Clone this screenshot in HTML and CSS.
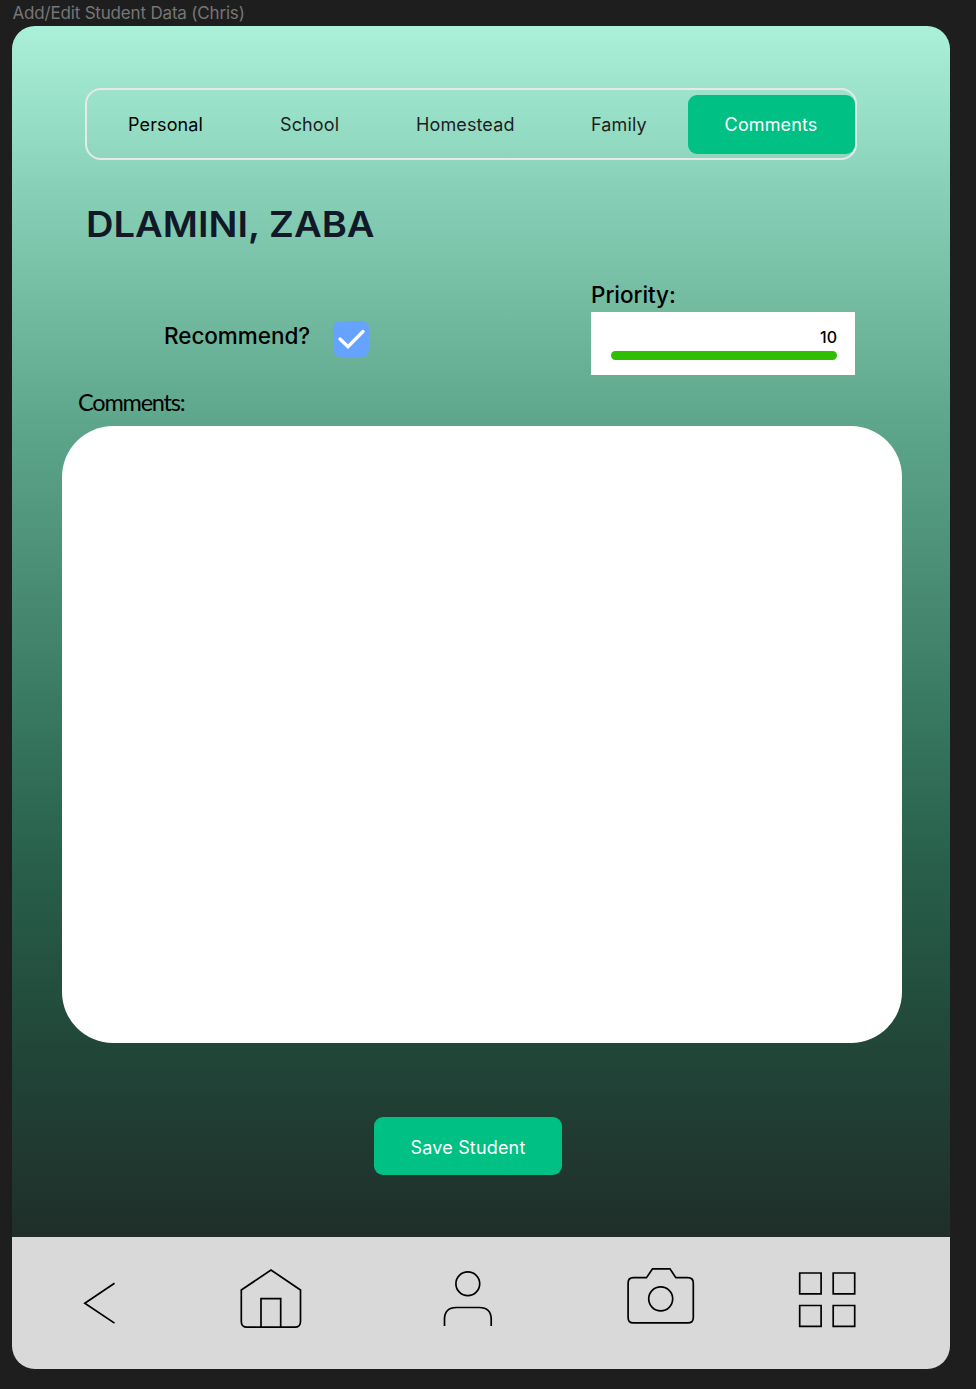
FILE: index.html
```html
<!DOCTYPE html>
<html lang="en">
<head>
<meta charset="utf-8">
<title>Add/Edit Student Data</title>
<link rel="stylesheet" href="styles.css">
</head>
<body>
<div class="frame-label">Add/Edit Student Data (Chris)</div>
<main class="screen">
  <nav class="tabs">
    <a class="tab personal">Personal</a>
    <a class="tab school">School</a>
    <a class="tab homestead">Homestead</a>
    <a class="tab family">Family</a>
    <a class="tab active">Comments</a>
  </nav>
  <h1 class="name"><span class="name-text">DLAMINI, ZABA</span></h1>
  <section class="fields">
    <div class="recommend">
      <span class="field-label recommend-label">Recommend?</span>
      <svg class="checkbox" width="36" height="36" viewBox="0 0 36 36"><rect width="36" height="36" rx="7.5" fill="#66a3ff"/><path d="M7 18l8 7.700L30 10.500" fill="none" stroke="#fff" stroke-width="3.300" stroke-linecap="round"/></svg>
    </div>
    <div class="priority">
      <span class="field-label priority-label">Priority:</span>
      <div class="slider"><span class="value">10</span><div class="track"></div></div>
    </div>
  </section>
  <label class="comments-label">Comments:</label>
  <div class="comments-box"></div>
  <button class="save">Save Student</button>
  <footer class="bottom-nav">
    <svg class="nav-icons" width="938" height="132" viewBox="12 1237 938 132" fill="none" stroke="#000" stroke-width="1.700">
      <path d="M114.500 1283.300L84.800 1303.200l29.700 19.900"/>
      <path d="M241.300 1290l29.700-20 29.500 20v31.500q0 5.700-5.700 5.700h-47.800q-5.700 0-5.700-5.700zM261 1327.200v-28.500h19.700v28.500"/>
      <circle cx="467.800" cy="1283.800" r="11.900"/>
      <path d="M444.500 1326v-6.500q0-12 12-12h22.700q12 0 12 12v6.500"/>
      <path d="M633.300 1277.700h13.200l6-8.900h17.500l5.800 8.900h12q5.500 0 5.500 5.500v34.200q0 5.500-5.500 5.500h-54.500q-5.200 0-5.200-5.500v-34.200q0-5.500 5.200-5.500z"/>
      <circle cx="660.700" cy="1298.800" r="12"/>
      <path d="M799.700 1273h21.400v20.800h-21.400zM833.200 1273h21.500v20.800h-21.500zM799.700 1305.500h21.400v20.800h-21.400zM833.200 1305.500h21.500v20.800h-21.500z"/>
    </svg>
  </footer>
</main>
</body>
</html>
```

FILE: styles.css
```css
* { box-sizing: border-box; }
body { margin: 0; height: 1389px; background: #1e1e1e; color: #000; font-family: Inter, sans-serif; overflow: hidden; }
.frame-label { height: 26px; padding-left: 12.500px; font-size: 17px; line-height: 26px; letter-spacing: -0.180px; color: #767676; white-space: nowrap; }
.screen { width: 938px; height: 1343px; margin-left: 12px; border-radius: 23px; overflow: hidden; display: flex; flex-direction: column; background: linear-gradient(180deg, #abf0d9 0, #88d1b8 160px, #5ca58a 404px, #3a7a63 674px, #28604b 833px, #214638 1024px, #1f2e2a 1211px); }
.tabs { width: 772px; height: 72px; margin: 62px 0 0 73px; border: 2px solid #e8e8e8; border-radius: 16px; display: flex; align-items: center; flex: none; }
.tab { flex: none; font-size: 18px; line-height: 24px; padding-top: 1px; letter-spacing: 0.120px; color: #1e1e1e; }
.personal { margin-left: 41px; width: 152px; color: #000; }
.school { width: 136px; }
.homestead { width: 175px; }
.family { width: 97px; }
.active { width: 167px; height: 59px; padding: 0 1px 0 0; border-radius: 9px; background: #00c083; color: #fff; text-align: center; line-height: 60px; }
.name { margin: 38px 0 0 74px; height: 52px; font-size: 36px; line-height: 52px; font-weight: 600; color: #111827; white-space: nowrap; }
.name-text { display: inline-block; transform: scaleX(1.059); transform-origin: 0 50%; }
.fields { display: flex; justify-content: space-between; margin: 31px 95px 0 152px; height: 95px; }
.recommend { display: flex; gap: 23px; padding-top: 40px; }
.field-label { font-size: 22.500px; line-height: 30px; font-weight: 500; letter-spacing: -0.050px; white-space: nowrap; }
.checkbox { flex: none; margin-top: 0; }
.priority { width: 264px; }
.priority-label { display: block; height: 31px; line-height: 28px; }
.slider { height: 63px; background: #fff; padding: 15px 18px 0 20px; text-align: right; }
.value { display: block; height: 24px; font-size: 16px; line-height: 20px; font-weight: 500; }
.track { height: 9px; border-radius: 5px; background: #30bf00; }
.comments-label { height: 50px; margin-left: 66px; font-family: Lato, sans-serif; font-size: 23.500px; line-height: 52px; letter-spacing: -1.200px; }
.comments-box { width: 840px; height: 617px; margin-left: 50px; background: #fff; border-radius: 51px; flex: none; }
.save { width: 188px; height: 58px; margin: 74px 0 0 362px; border: 0; border-radius: 9px; background: #00c083; color: #fff; font: 18px/58px Inter, sans-serif; letter-spacing: 0.170px; padding: 1px 0 0; flex: none; line-height: 59px; }
.bottom-nav { height: 132px; margin-top: auto; background: #d9d9d9; flex: none; }
.nav-icons { display: block; }
```
